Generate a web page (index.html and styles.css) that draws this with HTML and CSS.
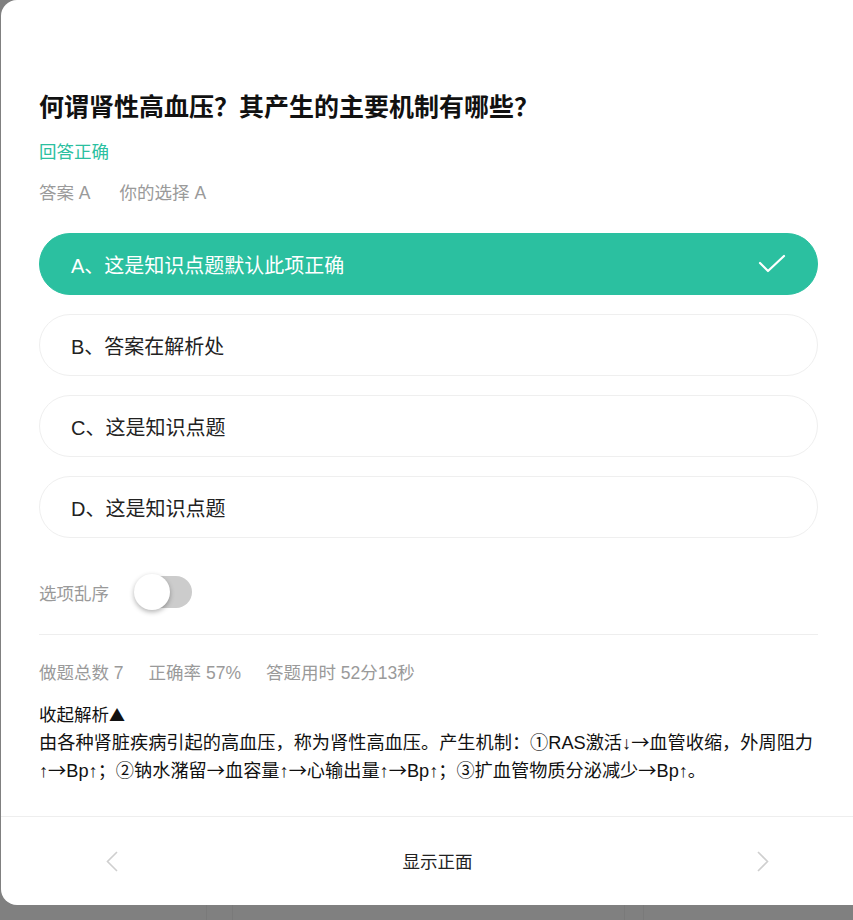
FILE: index.html
```html
<!DOCTYPE html>
<html lang="zh-CN">
<head>
<meta charset="utf-8">
<title>题目</title>
<link rel="stylesheet" href="styles.css">
</head>
<body>
<div class="card">
  <div class="content">
    <h1 class="title">何谓肾性高血压？其产生的主要机制有哪些？</h1>
    <div class="result">回答正确</div>
    <div class="answers"><span>答案 A</span><span>你的选择 A</span></div>
    <div class="options">
      <div class="option correct">
        <span>A、这是知识点题默认此项正确</span>
        <svg class="check" width="28" height="20" viewBox="0 0 28 20"><polyline points="2,9 10,17 26,2" fill="none" stroke="#fff" stroke-width="2.2" stroke-linecap="round" stroke-linejoin="round"/></svg>
      </div>
      <div class="option"><span>B、答案在解析处</span></div>
      <div class="option"><span>C、这是知识点题</span></div>
      <div class="option"><span>D、这是知识点题</span></div>
    </div>
    <div class="shuffle">
      <span>选项乱序</span>
      <div class="toggle"><div class="knob"></div></div>
    </div>
    <div class="divider"></div>
    <div class="stats"><span>做题总数 7</span><span>正确率 57%</span><span>答题用时 52分13秒</span></div>
    <div class="collapse">收起解析<span class="tri">▲</span></div>
    <div class="analysis">由各种肾脏疾病引起的高血压，称为肾性高血压。产生机制：①RAS激活↓<span class="arr">→</span>血管收缩，外周阻力↑<span class="arr">→</span>Bp↑；②钠水潴留<span class="arr">→</span>血容量↑<span class="arr">→</span>心输出量↑<span class="arr">→</span>Bp↑；③扩血管物质分泌减少<span class="arr">→</span>Bp↑。</div>
  </div>
  <div class="footer">
    <svg class="chev" width="12" height="21" viewBox="0 0 12 21"><polyline points="11,1 1.5,10.5 11,20" fill="none" stroke="#cfcfcf" stroke-width="1.6"/></svg>
    <span class="flip">显示正面</span>
    <svg class="chev" width="12" height="21" viewBox="0 0 12 21"><polyline points="1,1 10.5,10.5 1,20" fill="none" stroke="#cfcfcf" stroke-width="1.6"/></svg>
  </div>
</div>
<div class="backdrop">
  <div class="bseg s1"></div>
  <div class="bseg s2"></div>
  <div class="bseg s3"></div>
  <div class="bseg s4"></div>
</div>
</body>
</html>
```
FILE: styles.css
```css
html, body {
  margin: 0;
  padding: 0;
  background: #808080;
  overflow: hidden;
  width: 853px;
  height: 920px;
}
body {
  font-family: "Liberation Sans", "Noto Sans CJK SC", sans-serif;
  color: #111;
}
.card {
  margin-left: 1px;
  width: 874px;
  height: 905px;
  background: #fff;
  border-radius: 16px;
  display: flex;
  flex-direction: column;
  overflow: hidden;
}
.content {
  width: 779px;
  margin-left: 38px;
  padding-top: 89px;
  display: flex;
  flex-direction: column;
}
.title {
  margin: 0;
  font-size: 25px;
  line-height: 36px;
  font-weight: bold;
  color: #111;
}
.result {
  margin-top: 14px;
  font-size: 17.5px;
  line-height: 26px;
  color: #2bc0a0;
}
.answers {
  margin-top: 15px;
  font-size: 17.5px;
  line-height: 26px;
  color: #9a9a9a;
  display: flex;
  gap: 29px;
}
.options {
  margin-top: 27px;
  display: flex;
  flex-direction: column;
  gap: 19px;
}
.option {
  height: 62px;
  box-sizing: border-box;
  border: 1px solid #efefef;
  border-radius: 31px;
  padding: 0 31px 0 31px;
  display: flex;
  align-items: center;
  justify-content: space-between;
  font-size: 20px;
  color: #222;
}
.option.correct {
  background: #2bc0a0;
  border-color: #2bc0a0;
  color: #fff;
}
.check {
  display: block;
}
.shuffle {
  margin-top: 38px;
  height: 32px;
  display: flex;
  align-items: center;
  gap: 29px;
  font-size: 17.5px;
  color: #9a9a9a;
}
.toggle {
  position: relative;
  width: 54px;
  height: 32px;
  border-radius: 16px;
  background: #cccccc;
}
.knob {
  position: absolute;
  left: -4px;
  top: -2px;
  width: 36px;
  height: 36px;
  border-radius: 50%;
  background: #fff;
  box-shadow: 0 2px 5px rgba(0, 0, 0, 0.3);
}
.divider {
  margin-top: 26px;
  height: 1px;
  background: #eeeeee;
}
.stats {
  margin-top: 25px;
  font-size: 17.5px;
  line-height: 26px;
  color: #9a9a9a;
  display: flex;
  gap: 25px;
}
.collapse {
  margin-top: 16px;
  font-size: 17.5px;
  line-height: 26px;
  color: #111;
}
.tri {
  display: inline-block;
  font-family: "Noto Sans CJK SC", sans-serif;
  font-size: 16px;
  line-height: 22px;
}
.analysis {
  margin-top: 1px;
  font-size: 18.2px;
  line-height: 28px;
  color: #111;
}
.arr {
  display: inline-block;
  font-family: "Noto Sans CJK SC", sans-serif;
  line-height: 24px;
}
.footer {
  margin-top: 31px;
  border-top: 1px solid #eeeeee;
  flex: 1;
  display: flex;
  align-items: center;
  justify-content: space-between;
  padding: 0 106px 0 105px;
}
.flip {
  font-size: 17.5px;
  color: #222;
  padding-bottom: 2px;
}
.chev {
  display: block;
}
.backdrop {
  height: 15px;
  display: flex;
}
.bseg {
  height: 100%;
}
.s1 { width: 206px; }
.s2 { width: 25px; border-left: 1px solid #7a7a7a; border-right: 1px solid #7a7a7a; }
.s3 { width: 391px; }
.s4 { width: 18px; border-left: 1px solid #7a7a7a; border-right: 1px solid #7a7a7a; }
```
